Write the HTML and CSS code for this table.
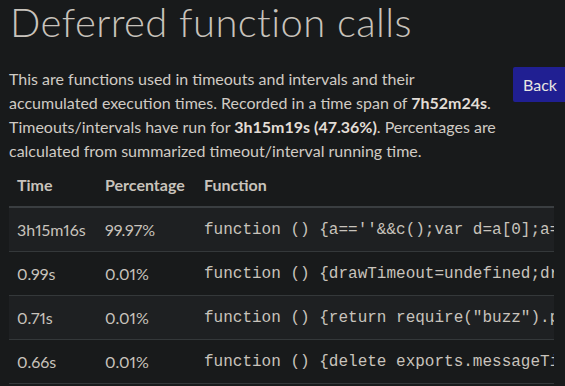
FILE: index.html
```html
<!DOCTYPE html>
<html lang="en">
<head>
<meta charset="utf-8">
<title>Deferred function calls</title>
<link rel="stylesheet" href="styles.css">
</head>
<body>
<div class="page">
  <h1 class="title">Deferred function calls</h1>
  <div class="intro">
    <p class="desc">This are functions used in timeouts and intervals and their accumulated execution times. Recorded in a time span of <b>7h52m24s</b>. Timeouts/intervals have run for <b>3h15m19s (47.36%)</b>. Percentages are calculated from summarized timeout/interval running time.</p>
    <button class="back">Back</button>
  </div>
  <div class="table-wrap">
    <table class="calls">
      <colgroup>
        <col class="c-time">
        <col class="c-pct">
        <col>
      </colgroup>
      <thead>
        <tr><th>Time</th><th>Percentage</th><th>Function</th></tr>
      </thead>
      <tbody>
        <tr class="odd"><td class="num">3h15m16s</td><td class="num">99.97%</td><td class="code">function () {a==''&amp;&amp;c();var d=a[0];a=a.slice(1);d()}</td></tr>
        <tr><td class="num">0.99s</td><td class="num">0.01%</td><td class="code">function () {drawTimeout=undefined;draw()}</td></tr>
        <tr class="odd"><td class="num">0.71s</td><td class="num">0.01%</td><td class="code">function () {return require("buzz").pattern()}</td></tr>
        <tr><td class="num">0.66s</td><td class="num">0.01%</td><td class="code">function () {delete exports.messageTimeout}</td></tr>
      </tbody>
    </table>
  </div>
</div>
</body>
</html>
```

FILE: styles.css
```css
html, body {
  margin: 0;
  padding: 0;
  background: #181a1b;
  overflow: hidden;
}
body {
  color: #d0cbc4;
  font-family: Lato, "Noto Sans", sans-serif;
  font-size: 16px;
  line-height: 24px;
}
.page {
  padding: 0 11px 0 9px;
}
.title {
  margin: 0;
  padding-left: 1px;
  font-size: 40px;
  line-height: 44px;
  font-weight: 300;
  letter-spacing: 0.4px;
  color: #c8c3bc;
}
.intro {
  display: flex;
  align-items: flex-start;
  margin-top: 23px;
  width: 580px;
}
.desc {
  margin: 0;
  width: 495px;
  flex: none;
}
.desc b {
  font-weight: 700;
  color: #e2ddd6;
}
.back {
  margin-left: 9px;
  flex: none;
  height: 35px;
  border: none;
  border-radius: 2px;
  background: #201f92;
  color: #e8e6e3;
  font-family: inherit;
  font-size: 16px;
  line-height: 24px;
  padding: 0 10px;
}
.table-wrap {
  overflow: hidden;
}
.calls {
  border-collapse: collapse;
  white-space: nowrap;
  width: 100%;
  table-layout: fixed;
}
.c-time { width: 88px; }
.c-pct { width: 99px; }
.calls th {
  text-align: left;
  font-weight: 700;
  padding: 10px 8px 9px;
  border-bottom: 2px solid #3a3e41;
  color: #c8c3bc;
}
.calls td {
  padding: 10px 8px 9px;
  border-bottom: 1px solid #34383a;
  color: #c8c3bc;
}
.calls td.num {
  font-variant-numeric: proportional-nums;
}
.calls tr.odd td {
  background: #1e2022;
}
.calls td.code {
  font-family: "Liberation Mono", monospace;
  font-size: 16px;
}
```
